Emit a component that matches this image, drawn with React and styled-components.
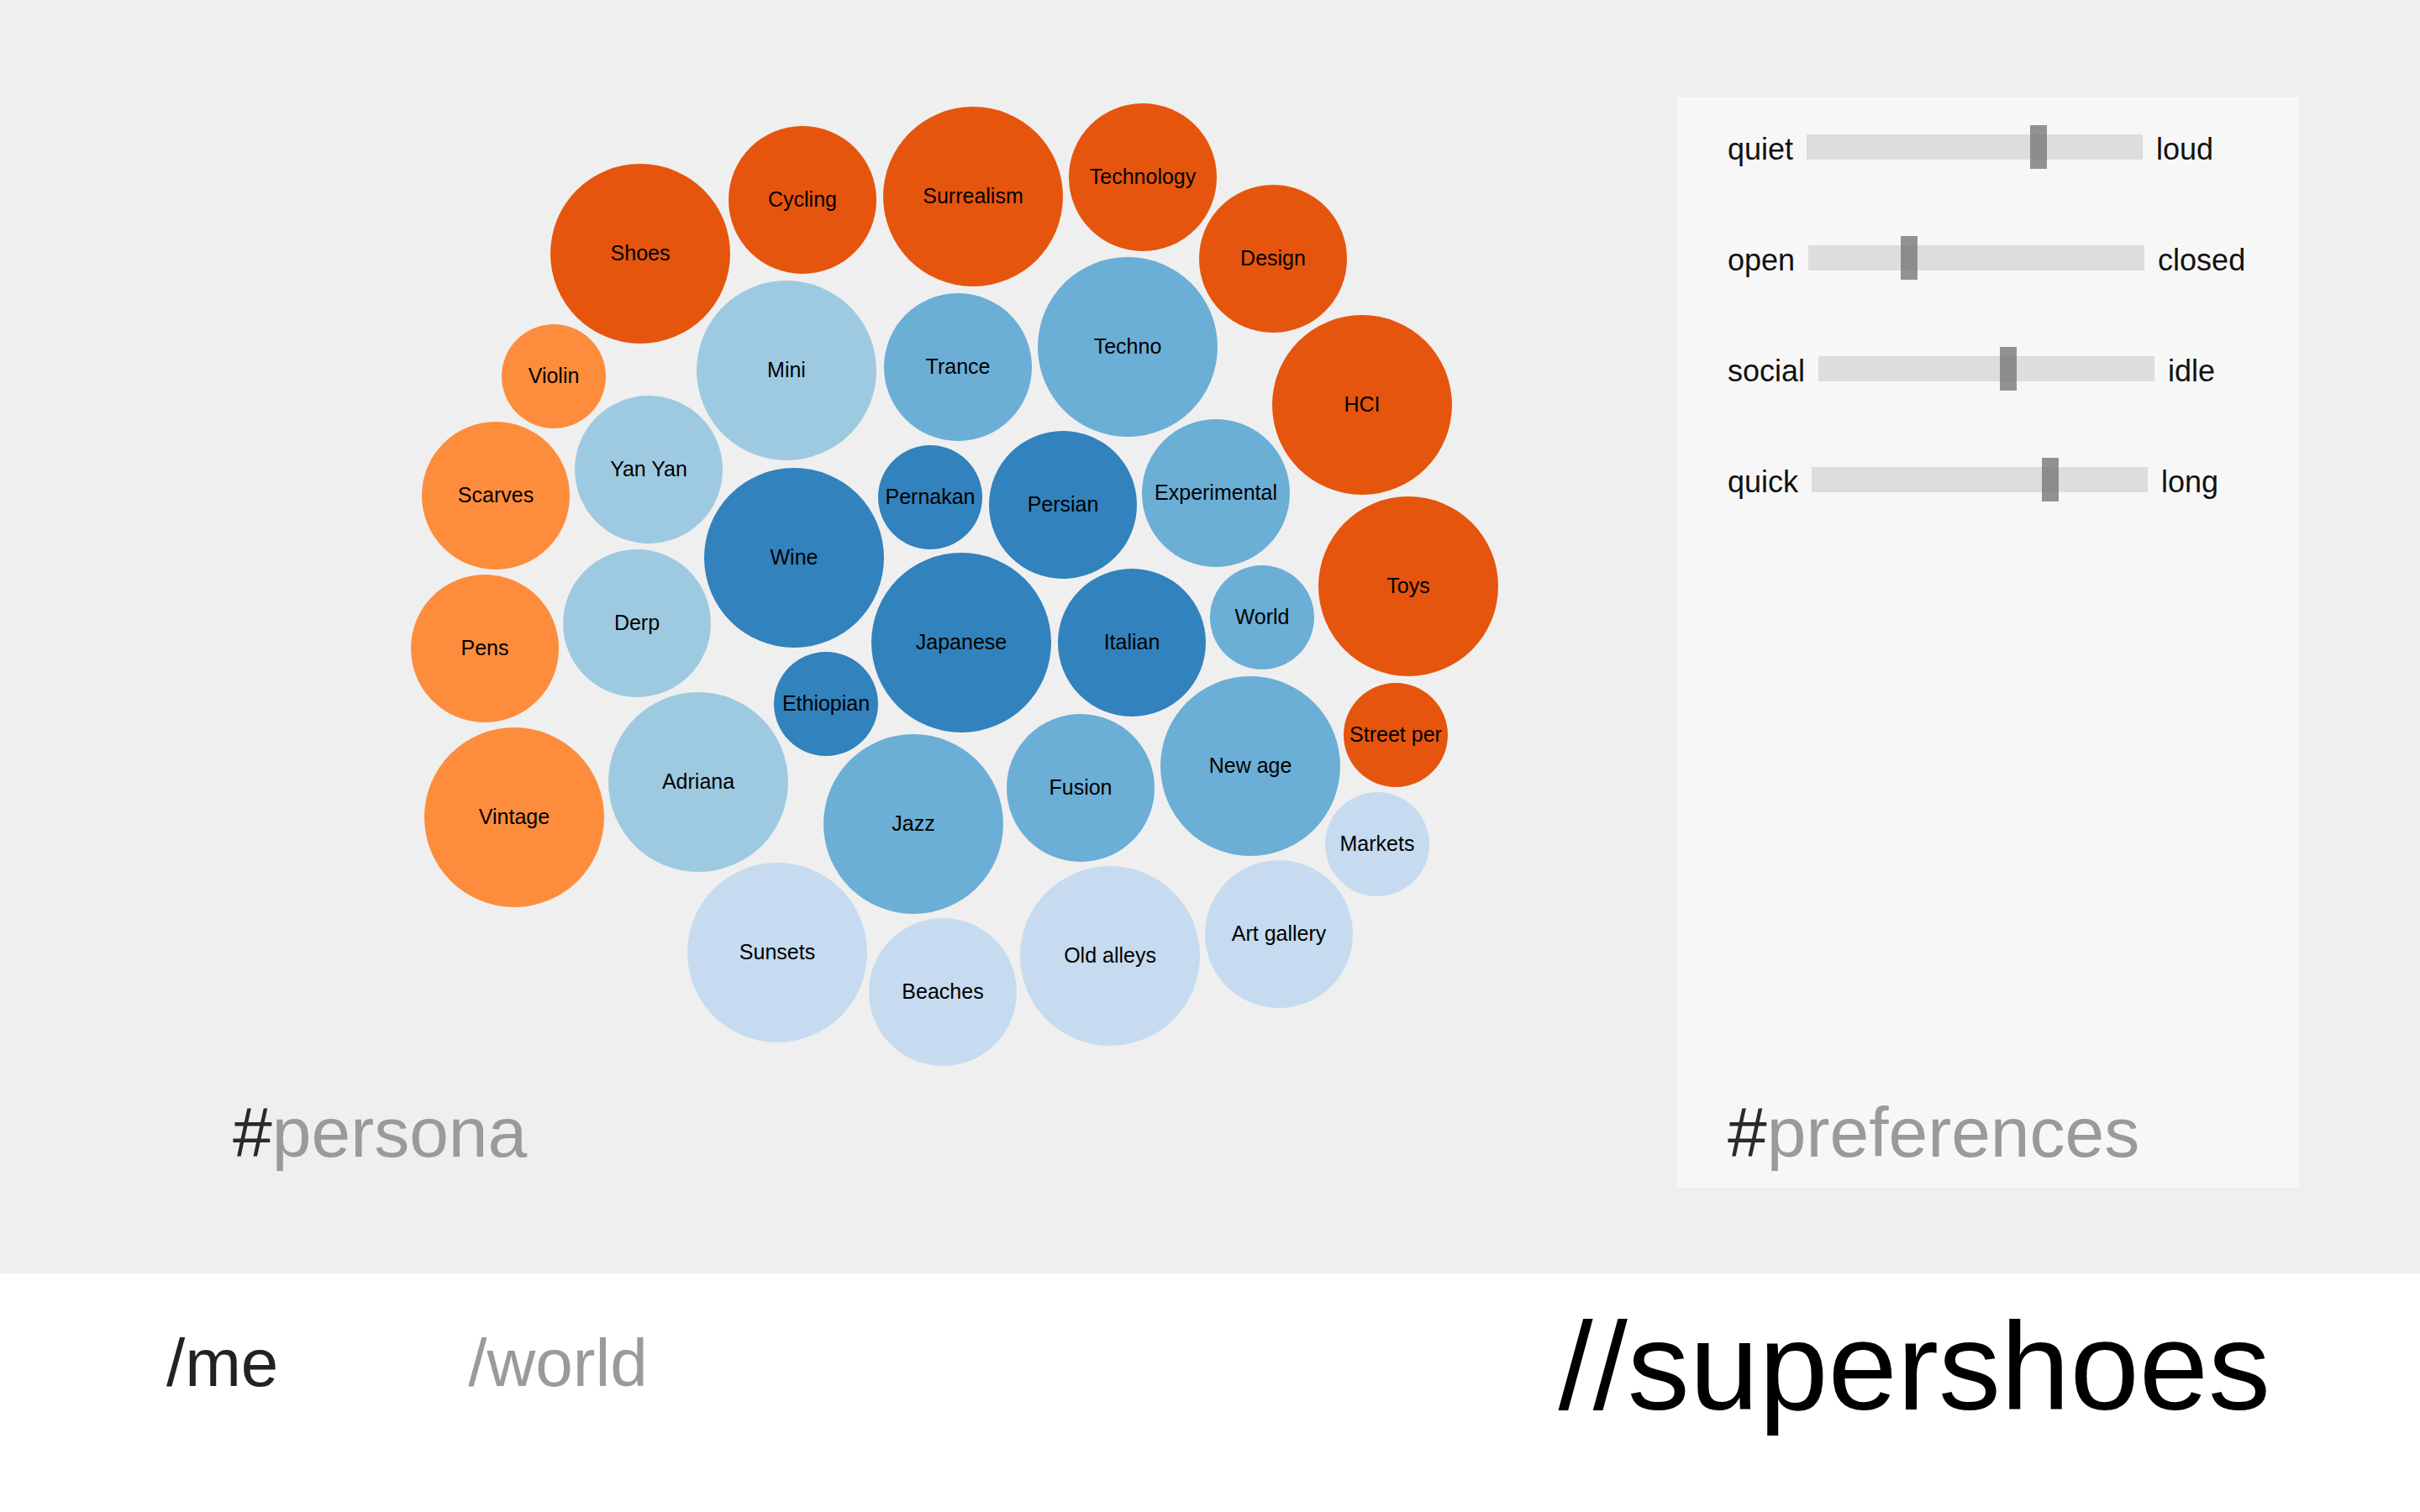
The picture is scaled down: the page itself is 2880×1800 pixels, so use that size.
import styled, { createGlobalStyle } from 'styled-components';

const GlobalStyle = createGlobalStyle`
  html, body {
    margin: 0;
    padding: 0;
    background: #ffffff;
    font-family: "Liberation Sans", Arial, Helvetica, sans-serif;
  }
`;

const COLORS = {
  hot: '#e6550d',
  warm: '#fd8d3c',
  deep: '#3182bd',
  mid: '#6baed6',
  soft: '#9ecae1',
  pale: '#c6dbef',
};

// page coordinates of each bubble (cx, cy, r)
const bubbles = [
  { name: 'Shoes', x: 762, y: 302, r: 107, tone: 'hot' },
  { name: 'Cycling', x: 955, y: 238, r: 88, tone: 'hot' },
  { name: 'Surrealism', x: 1158, y: 234, r: 107, tone: 'hot' },
  { name: 'Technology', x: 1360, y: 211, r: 88, tone: 'hot' },
  { name: 'Design', x: 1515, y: 308, r: 88, tone: 'hot' },
  { name: 'HCI', x: 1621, y: 482, r: 107, tone: 'hot' },
  { name: 'Toys', x: 1676, y: 698, r: 107, tone: 'hot' },
  { name: 'Street per', x: 1661, y: 875, r: 62, tone: 'hot' },
  { name: 'Violin', x: 659, y: 448, r: 62, tone: 'warm' },
  { name: 'Scarves', x: 590, y: 590, r: 88, tone: 'warm' },
  { name: 'Pens', x: 577, y: 772, r: 88, tone: 'warm' },
  { name: 'Vintage', x: 612, y: 973, r: 107, tone: 'warm' },
  { name: 'Mini', x: 936, y: 441, r: 107, tone: 'soft' },
  { name: 'Yan Yan', x: 772, y: 559, r: 88, tone: 'soft' },
  { name: 'Derp', x: 758, y: 742, r: 88, tone: 'soft' },
  { name: 'Adriana', x: 831, y: 931, r: 107, tone: 'soft' },
  { name: 'Trance', x: 1140, y: 437, r: 88, tone: 'mid' },
  { name: 'Techno', x: 1342, y: 413, r: 107, tone: 'mid' },
  { name: 'Experimental', x: 1447, y: 587, r: 88, tone: 'mid' },
  { name: 'World', x: 1502, y: 735, r: 62, tone: 'mid' },
  { name: 'New age', x: 1488, y: 912, r: 107, tone: 'mid' },
  { name: 'Fusion', x: 1286, y: 938, r: 88, tone: 'mid' },
  { name: 'Jazz', x: 1087, y: 981, r: 107, tone: 'mid' },
  { name: 'Wine', x: 945, y: 664, r: 107, tone: 'deep' },
  { name: 'Pernakan', x: 1107, y: 592, r: 62, tone: 'deep' },
  { name: 'Persian', x: 1265, y: 601, r: 88, tone: 'deep' },
  { name: 'Japanese', x: 1144, y: 765, r: 107, tone: 'deep' },
  { name: 'Italian', x: 1347, y: 765, r: 88, tone: 'deep' },
  { name: 'Ethiopian', x: 983, y: 838, r: 62, tone: 'deep' },
  { name: 'Markets', x: 1639, y: 1005, r: 62, tone: 'pale' },
  { name: 'Sunsets', x: 925, y: 1134, r: 107, tone: 'pale' },
  { name: 'Beaches', x: 1122, y: 1181, r: 88, tone: 'pale' },
  { name: 'Old alleys', x: 1321, y: 1138, r: 107, tone: 'pale' },
  { name: 'Art gallery', x: 1522, y: 1112, r: 88, tone: 'pale' },
];

const CHART_X = 440;
const CHART_Y = 116;

const sliders = [
  { left: 'quiet', right: 'loud', at: 266 },
  { left: 'open', right: 'closed', at: 110 },
  { left: 'social', right: 'idle', at: 216 },
  { left: 'quick', right: 'long', at: 274 },
];

export default function App() {
  return (
    <>
      <GlobalStyle />
      <Page>
        <Main>
          <Persona>
            <Chart width="1360" height="1165" viewBox="0 0 1360 1165">
              {bubbles.map((b) => (
                <g key={b.name} transform={`translate(${b.x - CHART_X}, ${b.y - CHART_Y})`}>
                  <circle r={b.r} fill={COLORS[b.tone]} />
                  <BubbleLabel dy="0.3em" textAnchor="middle">{b.name}</BubbleLabel>
                </g>
              ))}
            </Chart>
            <SectionTitle><Hash>#</Hash>persona</SectionTitle>
          </Persona>

          <Preferences>
            <SliderList>
              {sliders.map((s) => (
                <SliderRow key={s.left}>
                  <SliderLabel>{s.left}</SliderLabel>
                  <Track>
                    <Thumb style={{ left: s.at }} />
                  </Track>
                  <SliderLabel>{s.right}</SliderLabel>
                </SliderRow>
              ))}
            </SliderList>
            <SectionTitle><Hash>#</Hash>preferences</SectionTitle>
          </Preferences>
        </Main>

        <Footer>
          <Nav>
            <NavLink $active>/me</NavLink>
            <NavLink>/world</NavLink>
          </Nav>
          <Logo>//supershoes</Logo>
        </Footer>
      </Page>
    </>
  );
}

const Page = styled.div`
  width: 100%;
  min-height: 1800px;
  background: #ffffff;
`;

const Main = styled.main`
  height: 1516px;
  box-sizing: border-box;
  background: #efefef;
  padding: 116px 144px 102px 0;

  display: flex;
  align-items: stretch;
`;

const Persona = styled.section`
  flex: 1;
  display: flex;
  flex-direction: column;
  justify-content: space-between;
  padding: 0 0 24px 277px;
`;

const Chart = styled.svg`
  display: block;
  margin-left: ${CHART_X - 277}px;
`;

const BubbleLabel = styled.text`
  font-family: "Liberation Sans", Arial, sans-serif;
  font-size: 25px;
  fill: #000000;
`;

const SectionTitle = styled.h2`
  margin: 0;
  font-size: 84px;
  font-weight: 400;
  line-height: 1;
  color: #9a9a9a;
  white-space: nowrap;
`;

const Hash = styled.span`
  color: #2a2a2a;
`;

const Preferences = styled.aside`
  width: 740px;
  box-sizing: border-box;
  background: #f7f7f7;
  padding: 33px 0 24px 60px;

  display: flex;
  flex-direction: column;
  justify-content: space-between;
`;

const SliderList = styled.div`
  display: flex;
  flex-direction: column;
  gap: 80px;
`;

const SliderRow = styled.div`
  height: 52px;
  display: flex;
  align-items: center;
  gap: 16px;
`;

const SliderLabel = styled.span`
  font-size: 36px;
  line-height: 1;
  color: #111111;
  margin-top: 5px;
`;

const Track = styled.div`
  position: relative;
  width: 400px;
  height: 30px;
  background: #dddddd;
`;

const Thumb = styled.div`
  position: absolute;
  top: -11px;
  width: 20px;
  height: 52px;
  background: rgba(120, 120, 120, 0.8);
`;

const Footer = styled.footer`
  height: 284px;
  box-sizing: border-box;
  padding: 37px 178px 0 198px;

  display: flex;
  justify-content: space-between;
  align-items: flex-start;
`;

const Nav = styled.nav`
  display: flex;
  gap: 226px;
  margin-top: 30px;
`;

const NavLink = styled.a`
  font-size: 80px;
  line-height: 1;
  color: ${(p) => (p.$active ? '#222222' : '#9a9a9a')};
  text-decoration: none;
  cursor: pointer;
`;

const Logo = styled.h1`
  margin: 0;
  font-size: 148px;
  font-weight: 400;
  line-height: 1;
  color: #000000;
`;
